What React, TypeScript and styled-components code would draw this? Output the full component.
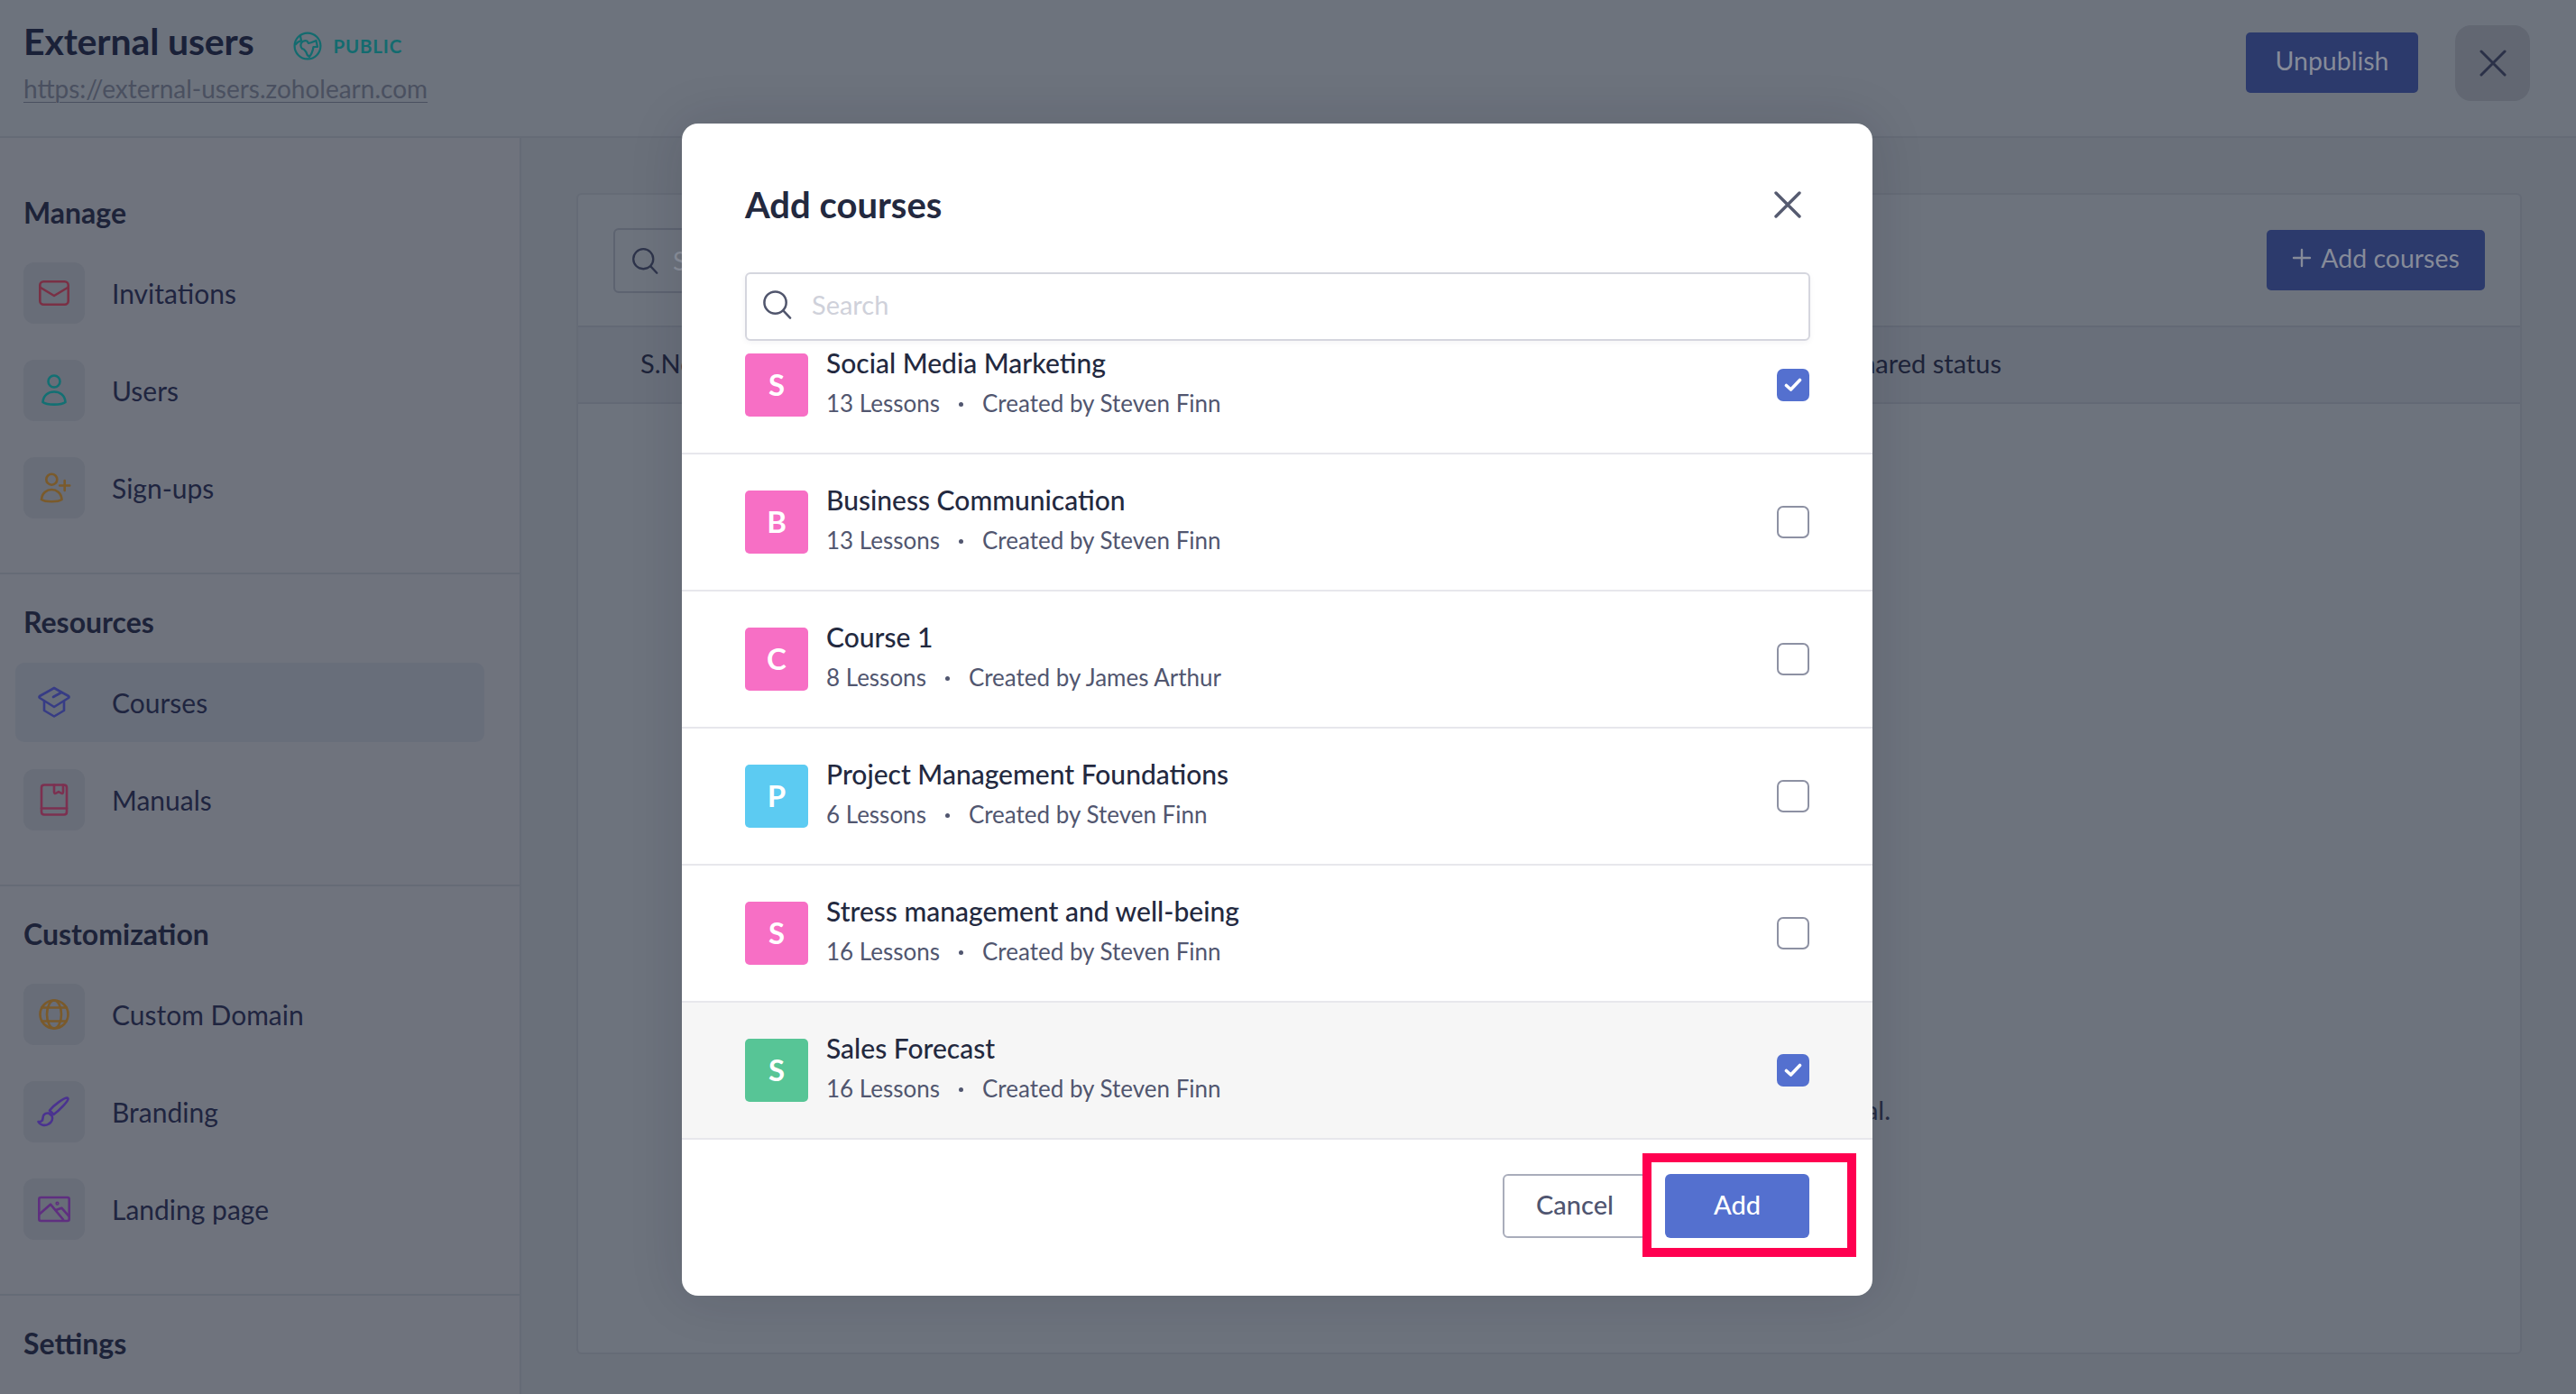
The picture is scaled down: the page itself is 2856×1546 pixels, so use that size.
import React from "react";
import styled, { createGlobalStyle } from "styled-components";

const Global = createGlobalStyle`
  html, body { margin: 0; padding: 0; background: #6d737d; }
  body { font-family: "Lato", "Liberation Sans", sans-serif; overflow: hidden; }
  * { box-sizing: border-box; }
`;

const Page = styled.div`
  position: relative;
  width: 2856px;
  height: 1546px;
  overflow: hidden;
  display: flex;
  flex-direction: column;
  background: #6d737d;
  color: #1d2339;
`;

const Header = styled.header`
  height: 153px;
  flex: none;
  display: flex;
  align-items: flex-start;
  justify-content: space-between;
  padding: 0 51px 0 26px;
  border-bottom: 2px solid #656b76;
`;
const HeaderLeft = styled.div`
  display: flex;
  flex-direction: column;
  padding-top: 22px;
`;
const TitleRow = styled.div`
  display: flex;
  align-items: center;
  height: 48px;
`;
const PortalName = styled.h1`
  margin: 0;
  font-size: 41px;
  font-weight: 700;
  letter-spacing: -0.15px;
  line-height: 48px;
  color: #1a2138;
`;
const PublicBadge = styled.span`
  display: inline-flex;
  align-items: center;
  gap: 13px;
  margin: 10px 0 0 43px;
  font-size: 20.5px;
  font-weight: 700;
  letter-spacing: 0.8px;
  color: #136b6f;
`;
const PortalUrl = styled.a`
  margin-top: 10px;
  font-size: 28px;
  line-height: 36px;
  color: #4a5060;
  text-decoration: underline;
  text-underline-offset: 4px;
  text-decoration-thickness: 1px;
`;
const HeaderRight = styled.div`
  display: flex;
  align-items: flex-start;
  gap: 41px;
  padding-top: 28px;
`;
const DarkButton = styled.div<{ $w: number; $top?: number }>`
  width: ${(p) => p.$w}px;
  height: 67px;
  margin-top: ${(p) => p.$top ?? 0}px;
  padding-bottom: 5px;
  border-radius: 5px;
  background: #2c3a6c;
  color: #868b99;
  font-size: 28.5px;
  display: flex;
  align-items: center;
  justify-content: center;
  gap: 10px;
`;
const CloseTile = styled.div`
  width: 83px;
  height: 84px;
  border-radius: 18px;
  background: #626772;
  color: #2b3148;
  display: flex;
  align-items: center;
  justify-content: center;
`;

const Body = styled.div`
  flex: 1;
  display: flex;
  min-height: 0;
`;
const Sidebar = styled.nav`
  width: 578px;
  flex: none;
  padding-top: 30px;
  border-right: 2px solid #656b76;
  background: #6f737d;
`;
const Section = styled.section`
  padding: 33px 0 50px;
  border-bottom: 2px solid #656b76;
  &:last-child { border-bottom: 0; }
`;
const SectionTitle = styled.h2`
  margin: 0 0 25px 26px;
  font-size: 32px;
  line-height: 40px;
  font-weight: 700;
  color: #1d2339;
`;
const NavList = styled.div`
  display: flex;
  flex-direction: column;
  gap: 20px;
`;
const NavItem = styled.div<{ $active?: boolean }>`
  width: 520px;
  height: 88px;
  margin-left: 17px;
  padding-left: 9px;
  display: flex;
  align-items: center;
  gap: 30px;
  border-radius: 10px;
  background: ${(p) => (p.$active ? "#686e7a" : "transparent")};
  font-size: 30px;
  color: #1f2540;
`;
const Tile = styled.span<{ $active?: boolean }>`
  width: 68px;
  height: 68px;
  flex: none;
  border-radius: 12px;
  background: ${(p) => (p.$active ? "transparent" : "#686d78")};
  display: flex;
  align-items: center;
  justify-content: center;
`;

const Main = styled.main`
  flex: 1;
  padding: 61px 60px 44px 61px;
  background: #6a707a;
  display: flex;
`;
const Card = styled.div`
  flex: 1;
  display: flex;
  flex-direction: column;
  border: 2px solid #656b76;
  border-radius: 6px;
  background: #6d737d;
`;
const CardBar = styled.div`
  height: 145px;
  flex: none;
  display: flex;
  align-items: center;
  justify-content: space-between;
  padding: 0 39px 0 39px;
`;
const CardSearch = styled.div`
  width: 500px;
  height: 72px;
  display: flex;
  align-items: center;
  gap: 16px;
  padding-left: 18px;
  border: 2px solid #5d6370;
  border-radius: 6px;
  font-size: 28px;
  color: #8a8f9a;
`;
const TableHead = styled.div`
  height: 87px;
  flex: none;
  display: flex;
  align-items: center;
  justify-content: space-between;
  padding: 0 575px 4px 69px;
  background: #696f7a;
  border-top: 2px solid #636975;
  border-bottom: 2px solid #636975;
  font-size: 29px;
  color: #1d2339;
`;
const EmptyState = styled.div`
  flex: 1;
  padding: 765px 698px 0 0;
  text-align: right;
  font-size: 29px;
  color: #262c42;
`;

const Modal = styled.div`
  position: absolute;
  left: 756px;
  top: 137px;
  width: 1320px;
  height: 1300px;
  border-radius: 18px;
  background: #ffffff;
  box-shadow: 0 0 60px rgba(20, 24, 40, 0.14);
  display: flex;
  flex-direction: column;
  overflow: hidden;
`;
const ModalHead = styled.div`
  height: 165px;
  flex: none;
  display: flex;
  align-items: center;
  justify-content: space-between;
  padding: 14px 79px 0 70px;
  color: #565b70;
`;
const ModalTitle = styled.h3`
  margin: 0;
  font-size: 40px;
  line-height: 50px;
  font-weight: 700;
  color: #23293f;
`;
const SearchBox = styled.div`
  height: 76px;
  flex: none;
  margin: 0 69px 0 70px;
  display: flex;
  align-items: center;
  gap: 22px;
  padding: 0 0 6px 17px;
  border: 2px solid #d5d6de;
  border-radius: 6px;
  box-shadow: 0 2px 6px rgba(40, 45, 70, 0.05);
  font-size: 29px;
  color: #cfd1da;
  position: relative;
  z-index: 1;
  background: #fff;
`;
const ListClip = styled.div`
  height: 886px;
  flex: none;
  overflow: hidden;
`;
const List = styled.div`
  margin-top: -26px;
`;
const Row = styled.div<{ $hover?: boolean }>`
  height: 152px;
  display: flex;
  align-items: center;
  padding: 0 70px;
  background: ${(p) => (p.$hover ? "#f6f6f6" : "#ffffff")};
  border-bottom: 2px solid #e7e7ec;
`;
const Avatar = styled.span<{ $color: string }>`
  width: 70px;
  height: 70px;
  flex: none;
  padding-bottom: 2px;
  border-radius: 5px;
  background: ${(p) => p.$color};
  color: #fff;
  font-size: 33px;
  font-weight: 700;
  display: flex;
  align-items: center;
  justify-content: center;
`;
const RowText = styled.div`
  flex: 1;
  margin-left: 20px;
  padding-bottom: 5px;
  display: flex;
  flex-direction: column;
`;
const CourseName = styled.div`
  font-size: 30px;
  line-height: 36px;
  font-weight: 500;
  color: #23293f;
`;
const CourseMeta = styled.div`
  margin-top: 9px;
  display: flex;
  align-items: center;
  font-size: 26px;
  line-height: 36px;
  color: #51566f;
`;
const MetaDot = styled.span`
  width: 5px;
  height: 5px;
  margin: 3px 21px 0;
  border-radius: 50%;
  background: #51566f;
`;
const Check = styled.span<{ $on?: boolean }>`
  width: 36px;
  height: 36px;
  flex: none;
  border-radius: 7px;
  border: ${(p) => (p.$on ? "0" : "2px solid #8d91a3")};
  background: ${(p) => (p.$on ? "#5470cf" : "#fff")};
  display: flex;
  align-items: center;
  justify-content: center;
`;
const Footer = styled.div`
  flex: 1;
  display: flex;
  justify-content: flex-end;
  padding: 38px 70px 0 0;
  gap: 20px;
  position: relative;
`;
const BaseBtn = styled.div`
  height: 71px;
  padding-bottom: 4px;
  border-radius: 6px;
  font-size: 29px;
  display: flex;
  align-items: center;
  justify-content: center;
`;
const CancelBtn = styled(BaseBtn)`
  width: 160px;
  border: 2px solid #a9adbb;
  color: #4f5570;
  font-weight: 500;
`;
const AddBtn = styled(BaseBtn)`
  width: 160px;
  background: #5470cf;
  color: #fff;
  font-weight: 500;
`;
const Highlight = styled.div`
  position: absolute;
  left: 1065px;
  top: 15px;
  width: 237px;
  height: 115px;
  border: 10px solid #ff0050;
`;

type IconProps = { color: string; children: React.ReactNode };
const NavGlyph = ({ color, children }: IconProps) => (
  <svg width="44" height="44" viewBox="0 0 44 44" fill="none" stroke={color} strokeWidth="2.6" strokeLinecap="round" strokeLinejoin="round">
    {children}
  </svg>
);

const icons: Record<string, React.ReactNode> = {
  mail: (
    <NavGlyph color="#7a3045">
      <rect x="6.3" y="9.3" width="31.4" height="25.4" rx="4" />
      <path d="M7 16 L22 25 L37 16" />
    </NavGlyph>
  ),
  user: (
    <NavGlyph color="#137073">
      <circle cx="22" cy="12" r="6.5" />
      <path d="M9.5 35 C10 27 16 23.5 22 23.5 C28 23.5 34 27 34.5 35 C30 38.5 14 38.5 9.5 35 Z" />
    </NavGlyph>
  ),
  signup: (
    <NavGlyph color="#7a5a2b">
      <circle cx="19.3" cy="12.7" r="6" />
      <path d="M8 35 C8.5 27.5 14 24 19.3 24 C24.5 24 30 27.5 30.5 35 C26.5 38 12 38 8 35 Z" />
      <path d="M33.7 14 V25 M28.2 19.5 H39.2" />
    </NavGlyph>
  ),
  cap: (
    <NavGlyph color="#373c85">
      <path d="M22 6 L38 15 Q39 16 38 17 L22 27 L6 17 Q5 16 6 15 Z" />
      <path d="M11 21 V31 L22 37.5 L33 31 V21" />
      <path d="M21 16 L30 11" />
    </NavGlyph>
  ),
  book: (
    <NavGlyph color="#7c3050">
      <path d="M11 5.5 H33 Q36 5.5 36 8.5 V35.5 Q36 38.5 33 38.5 H11 Q8 38.5 8 35.5 V8.5 Q8 5.5 11 5.5 Z" />
      <path d="M8 31.5 H36" />
      <path d="M22 5.5 V13 Q22 16 24.5 14.5 L27 13 L29.5 14.5 Q32 16 32 13 V5.5" />
    </NavGlyph>
  ),
  globe: (
    <NavGlyph color="#7a5a2b">
      <circle cx="22" cy="22" r="15.5" />
      <ellipse cx="22" cy="22" rx="8" ry="15.5" />
      <path d="M8.5 14.5 H35.5 M8.5 29.5 H35.5" />
    </NavGlyph>
  ),
  brush: (
    <NavGlyph color="#4a3290">
      <path d="M36.5 6.5 C33 6.5 22 14 17 20.5 L21.5 25 C28 20 38 10 37.5 7.5 Z" />
      <path d="M16 23.5 C11 23 9.5 26.5 9.5 29 C9.5 32 7.5 33.5 4.5 33 C6.5 37 12 38 16 35.5 C19.5 33.5 21 30 19.5 26.5 Z" />
    </NavGlyph>
  ),
  image: (
    <NavGlyph color="#5f2f80">
      <rect x="5.3" y="9" width="33.4" height="26" rx="2" />
      <path d="M6 27.3 L18 16.7 L32 33.5" />
      <path d="M24 23 L30.3 20.7 L38 29.3" />
      <circle cx="25.5" cy="15.7" r="0.8" />
    </NavGlyph>
  ),
};

const SearchGlyph = ({ color, size }: { color: string; size: number }) => (
  <svg width={size} height={size} viewBox="0 0 34 34" fill="none" stroke={color} strokeWidth="2.6" strokeLinecap="round">
    <circle cx="15" cy="15" r="12.5" />
    <path d="M24.5 24.5 L32 32.5" />
  </svg>
);
const CrossGlyph = ({ color, size, width }: { color: string; size: number; width: number }) => (
  <svg width={size} height={size} viewBox="0 0 30 30" fill="none" stroke={color} strokeWidth={width} strokeLinecap="round">
    <path d="M2 2 L28 28 M28 2 L2 28" />
  </svg>
);
const Tick = () => (
  <svg width="20" height="16" viewBox="0 0 20 16" fill="none" stroke="#fff" strokeWidth="3.6" strokeLinecap="round" strokeLinejoin="round">
    <path d="M2.5 8.5 L7.5 13 L17.5 2.5" />
  </svg>
);

const sections = [
  { title: "Manage", items: [["mail", "Invitations"], ["user", "Users"], ["signup", "Sign-ups"]] },
  { title: "Resources", items: [["cap", "Courses"], ["book", "Manuals"]] },
  { title: "Customization", items: [["globe", "Custom Domain"], ["brush", "Branding"], ["image", "Landing page"]] },
  { title: "Settings", items: [] as string[][] },
];

const PINK = "#f76fc5";
const courses = [
  { l: "S", c: PINK, name: "Social Media Marketing", lessons: "13 Lessons", by: "Steven Finn", on: true },
  { l: "B", c: PINK, name: "Business Communication", lessons: "13 Lessons", by: "Steven Finn" },
  { l: "C", c: PINK, name: "Course 1", lessons: "8 Lessons", by: "James Arthur" },
  { l: "P", c: "#5ccbf2", name: "Project Management Foundations", lessons: "6 Lessons", by: "Steven Finn" },
  { l: "S", c: PINK, name: "Stress management and well-being", lessons: "16 Lessons", by: "Steven Finn" },
  { l: "S", c: "#57c596", name: "Sales Forecast", lessons: "16 Lessons", by: "Steven Finn", on: true, hover: true },
];

export default function App() {
  return (
    <Page>
      <Global />
      <Header>
        <HeaderLeft>
          <TitleRow>
            <PortalName>External users</PortalName>
            <PublicBadge>
              <svg width="32" height="32" viewBox="0 0 32 32" fill="none" stroke="#136b6f" strokeWidth="2.2" strokeLinejoin="round" strokeLinecap="round">
                <circle cx="16" cy="16" r="14.4" />
                <path d="M3 14 C6 10 8 11 9 10 L8 5" />
                <path d="M9 12.5 C11 10 14 10 15.5 10.5 L17 13 C20 12.5 23 11 25.5 10 L27 17 L22.5 17 C22 20 20.5 25 18 28 C16 27 15 25.5 14.5 23 C13 21 12.5 20 11.5 19.5 C9 19 7.5 16 9 12.5 Z" />
              </svg>
              PUBLIC
            </PublicBadge>
          </TitleRow>
          <PortalUrl>https://external-users.zoholearn.com</PortalUrl>
        </HeaderLeft>
        <HeaderRight>
          <DarkButton $w={191} $top={8}>Unpublish</DarkButton>
          <CloseTile>
            <CrossGlyph color="#2b3148" size={30} width={3} />
          </CloseTile>
        </HeaderRight>
      </Header>
      <Body>
        <Sidebar>
          {sections.map((s) => (
            <Section key={s.title}>
              <SectionTitle>{s.title}</SectionTitle>
              {s.items.length > 0 && (
                <NavList>
                  {s.items.map(([icon, label]) => (
                    <NavItem key={label} $active={label === "Courses"}>
                      <Tile $active={label === "Courses"}>{icons[icon]}</Tile>
                      {label}
                    </NavItem>
                  ))}
                </NavList>
              )}
            </Section>
          ))}
        </Sidebar>
        <Main>
          <Card>
            <CardBar>
              <CardSearch>
                <SearchGlyph color="#2e344b" size={30} />
                Search
              </CardSearch>
              <DarkButton $w={242}>
                <svg width="22" height="22" viewBox="0 0 22 22" stroke="#868b99" strokeWidth="2.4" strokeLinecap="round">
                  <path d="M11 2 V20 M2 11 H20" />
                </svg>
                Add courses
              </DarkButton>
            </CardBar>
            <TableHead>
              <span>S.No</span>
              <span>Shared status</span>
            </TableHead>
            <EmptyState>al.</EmptyState>
          </Card>
        </Main>
      </Body>
      <Modal>
        <ModalHead>
          <ModalTitle>Add courses</ModalTitle>
          <CrossGlyph color="#565b70" size={30} width={3.4} />
        </ModalHead>
        <SearchBox>
          <SearchGlyph color="#51566d" size={33} />
          Search
        </SearchBox>
        <ListClip>
          <List>
            {courses.map((c) => (
              <Row key={c.name} $hover={c.hover}>
                <Avatar $color={c.c}>{c.l}</Avatar>
                <RowText>
                  <CourseName>{c.name}</CourseName>
                  <CourseMeta>
                    {c.lessons}
                    <MetaDot />
                    Created by {c.by}
                  </CourseMeta>
                </RowText>
                <Check $on={c.on}>{c.on && <Tick />}</Check>
              </Row>
            ))}
          </List>
        </ListClip>
        <Footer>
          <CancelBtn>Cancel</CancelBtn>
          <AddBtn>Add</AddBtn>
          <Highlight />
        </Footer>
      </Modal>
    </Page>
  );
}
